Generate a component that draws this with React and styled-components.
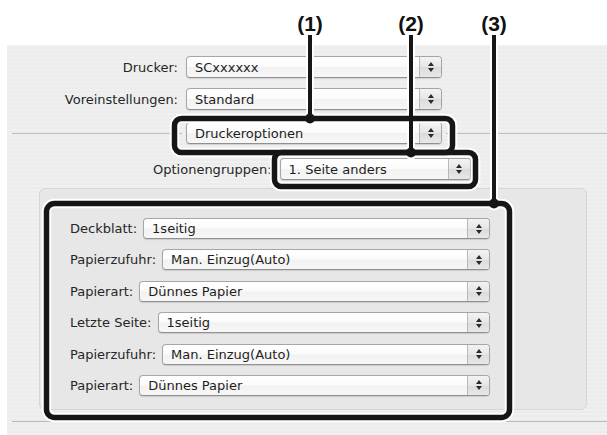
import React from 'react';
import styled, { createGlobalStyle } from 'styled-components';

const GlobalStyle = createGlobalStyle`
  html, body { margin: 0; padding: 0; background: #ffffff; }
  body { font-family: "DejaVu Sans", "Noto Sans", sans-serif; }
  *, *::before, *::after { box-sizing: border-box; }
`;

const Page = styled.div`
  position: relative;
  width: 607px;
  height: 435px;
  overflow: hidden;
  padding-top: 45px;
  background: #ffffff;
`;

const Sheet = styled.section`
  margin-left: 7px;
  height: 390px;
  padding-top: 11px;
  display: flex;
  flex-direction: column;
  background: repeating-linear-gradient(to bottom, #f0f0f0 0 2px, #ececec 2px 4px);
`;

const TopForm = styled.div`
  display: grid;
  grid-template-columns: 171px 256px;
  column-gap: 8px;
  row-gap: 10px;
  align-items: center;
`;

const Label = styled.span`
  font-size: 13px;
  color: #262626;
  white-space: nowrap;
  text-align: ${p => (p.$right ? 'right' : 'left')};
  flex: none;
`;

const PopupBox = styled.div`
  position: relative;
  display: flex;
  align-items: stretch;
  height: ${p => p.$h || 22}px;
  width: ${p => (p.$w ? `${p.$w}px` : 'auto')};
  flex: ${p => (p.$w ? 'none' : '1 1 auto')};
  border: 1px solid #a6a6a6;
  border-bottom-color: #909090;
  border-radius: 4px;
  background: linear-gradient(to bottom, #ffffff 0%, #fbfbfb 48%, #f2f2f2 52%, #f7f7f7 100%);
  box-shadow: 0 1px 1px rgba(0, 0, 0, 0.12);
  overflow: hidden;
  z-index: 1;
`;

const PopupText = styled.span`
  flex: 1 1 auto;
  display: flex;
  align-items: center;
  padding-left: 8px;
  font-size: 13px;
  color: #1e1e1e;
  white-space: nowrap;
`;

const Stepper = styled.span`
  flex: none;
  width: 22px;
  display: flex;
  flex-direction: column;
  align-items: center;
  justify-content: center;
  gap: 2px;
  border-left: 1px solid #b8b8b8;
  background: linear-gradient(to bottom, #f3f3f3 0%, #e6e6e6 50%, #dbdbdb 52%, #e8e8e8 100%);
`;

const Popup = ({ value, w, h }) => (
  <PopupBox $w={w} $h={h}>
    <PopupText>{value}</PopupText>
    <Stepper>
      <svg width="6" height="4" viewBox="0 0 6 4"><path d="M3 0 L6 4 L0 4 Z" fill="#2a2a2a" /></svg>
      <svg width="6" height="4" viewBox="0 0 6 4"><path d="M0 0 L6 0 L3 4 Z" fill="#2a2a2a" /></svg>
    </Stepper>
  </PopupBox>
);

const SeparatorRow = styled.div`
  margin-top: 12px;
  display: flex;
  align-items: center;
  padding-left: 5px;
`;

const Rule = styled.span`
  height: 1px;
  background: #bdbdbd;
  width: ${p => (p.$w ? `${p.$w}px` : 'auto')};
  flex: ${p => (p.$w ? 'none' : '1 1 auto')};
`;

const PopupSlot = styled.div`
  display: flex;
  margin: 0 4px;
`;

const OptionsRow = styled.div`
  margin-top: 14px;
  display: flex;
  align-items: center;
  gap: 8px;
  padding-left: 146px;
`;

const InnerPanel = styled.div`
  margin: 8px 20px 0 32px;
  height: 222px;
  padding: 29px 96px 0 30px;
  border: 1px solid #d6d6d6;
  border-radius: 6px;
  background: #e7e7e7;
  display: flex;
  flex-direction: column;
  gap: 10.4px;
`;

const InnerRow = styled.div`
  display: flex;
  align-items: center;
  gap: 6px;
`;

const BottomRule = styled.div`
  margin: 11px 0 0 5px;
  height: 1px;
  background: #b8b8b8;
`;

const Overlay = styled.svg`
  position: absolute;
  left: 0;
  top: 0;
  pointer-events: none;
  z-index: 5;
`;

const CalloutLabel = styled.text`
  font-family: "Liberation Sans Narrow", "Liberation Sans", Arial, sans-serif;
  font-weight: 700;
  font-size: 21px;
  fill: #111;
`;

const topRows = [
  { label: 'Drucker:', value: 'SCxxxxxx' },
  { label: 'Voreinstellungen:', value: 'Standard' },
];

const innerRows = [
  { label: 'Deckblatt:', value: '1seitig' },
  { label: 'Papierzufuhr:', value: 'Man. Einzug(Auto)' },
  { label: 'Papierart:', value: 'Dünnes Papier' },
  { label: 'Letzte Seite:', value: '1seitig' },
  { label: 'Papierzufuhr:', value: 'Man. Einzug(Auto)' },
  { label: 'Papierart:', value: 'Dünnes Papier' },
];

const boxes = [
  { x: 174.5, y: 118.5, w: 278, h: 34, r: 7 },
  { x: 274.5, y: 152.5, w: 201, h: 34, r: 7 },
  { x: 46.5, y: 203.5, w: 463, h: 214, r: 8 },
];

const leaders = [
  { n: '(1)', x: 310, y2: 118.5 },
  { n: '(2)', x: 411, y2: 152.5 },
  { n: '(3)', x: 494, y2: 203.5 },
];

const Callouts = () => (
  <Overlay width="607" height="435" viewBox="0 0 607 435">
    {boxes.map((b, i) => (
      <rect key={`hb${i}`} x={b.x} y={b.y} width={b.w} height={b.h} rx={b.r} fill="none" stroke="#fff" strokeWidth="9.5" />
    ))}
    {leaders.map(l => (
      <g key={`hl${l.n}`}>
        <line x1={l.x} y1={37} x2={l.x} y2={l.y2} stroke="#fff" strokeWidth="8" />
        <circle cx={l.x} cy={l.y2} r="7" fill="#fff" />
      </g>
    ))}
    {boxes.map((b, i) => (
      <rect key={`b${i}`} x={b.x} y={b.y} width={b.w} height={b.h} rx={b.r} fill="none" stroke="#161616" strokeWidth="5.5" />
    ))}
    {leaders.map(l => (
      <g key={`l${l.n}`}>
        <line x1={l.x} y1={35} x2={l.x} y2={l.y2} stroke="#161616" strokeWidth="4" />
        <circle cx={l.x} cy={l.y2} r="5" fill="#161616" />
        <CalloutLabel x={l.x} y={31} textAnchor="middle">{l.n}</CalloutLabel>
      </g>
    ))}
  </Overlay>
);

export default function App() {
  return (
    <>
      <GlobalStyle />
      <Page>
        <Sheet>
          <TopForm>
            {topRows.map(r => (
              <React.Fragment key={r.label}>
                <Label $right>{r.label}</Label>
                <Popup value={r.value} />
              </React.Fragment>
            ))}
          </TopForm>
          <SeparatorRow>
            <Rule $w={170} />
            <PopupSlot>
              <Popup value="Druckeroptionen" w={256} />
            </PopupSlot>
            <Rule />
          </SeparatorRow>
          <OptionsRow>
            <Label>Optionengruppen:</Label>
            <Popup value="1. Seite anders" w={191} />
          </OptionsRow>
          <InnerPanel>
            {innerRows.map((r, i) => (
              <InnerRow key={i}>
                <Label>{r.label}</Label>
                <Popup value={r.value} h={21} />
              </InnerRow>
            ))}
          </InnerPanel>
          <BottomRule />
        </Sheet>
        <Callouts />
      </Page>
    </>
  );
}
